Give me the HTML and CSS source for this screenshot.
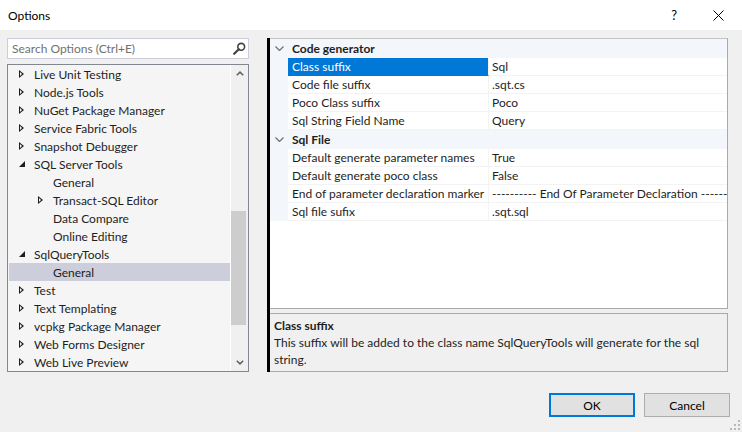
FILE: index.html
```html
<!DOCTYPE html>
<html lang="en">
<head>
<meta charset="utf-8">
<title>Options</title>
<link rel="stylesheet" href="styles.css">
</head>
<body>
<div class="window">
  <header class="titlebar">
    <span class="title">Options</span>
    <div class="tb-buttons">
      <span class="help">?</span>
      <svg class="close" width="11" height="11" viewBox="0 0 11 11"><path d="M0.5 0.5 L10.5 10.5 M10.5 0.5 L0.5 10.5" stroke="#000" stroke-width="1" fill="none"/></svg>
    </div>
  </header>

  <main class="body">
    <section class="left">
      <div class="search">
        <span class="search-ph">Search Options (Ctrl+E)</span>
        <svg class="search-icon" width="13" height="13" viewBox="0 0 13 13"><circle cx="8.2" cy="4.8" r="3.4" fill="none" stroke="#424242" stroke-width="1.6"/><path d="M5.8 7.2 L1.2 11.8" stroke="#424242" stroke-width="2.2" stroke-linecap="round"/></svg>
      </div>
      <div class="tree">
        <ul class="tree-rows">
          <li class="node lvl0"><span class="exp collapsed"></span>Live Unit Testing</li>
          <li class="node lvl0"><span class="exp collapsed"></span>Node.js Tools</li>
          <li class="node lvl0"><span class="exp collapsed"></span>NuGet Package Manager</li>
          <li class="node lvl0"><span class="exp collapsed"></span>Service Fabric Tools</li>
          <li class="node lvl0"><span class="exp collapsed"></span>Snapshot Debugger</li>
          <li class="node lvl0"><span class="exp expanded"></span>SQL Server Tools</li>
          <li class="node lvl1"><span class="exp"></span>General</li>
          <li class="node lvl1"><span class="exp collapsed"></span>Transact-SQL Editor</li>
          <li class="node lvl1"><span class="exp"></span>Data Compare</li>
          <li class="node lvl1"><span class="exp"></span>Online Editing</li>
          <li class="node lvl0"><span class="exp expanded"></span>SqlQueryTools</li>
          <li class="node lvl1 selected"><span class="exp"></span>General</li>
          <li class="node lvl0"><span class="exp collapsed"></span>Test</li>
          <li class="node lvl0"><span class="exp collapsed"></span>Text Templating</li>
          <li class="node lvl0"><span class="exp collapsed"></span>vcpkg Package Manager</li>
          <li class="node lvl0"><span class="exp collapsed"></span>Web Forms Designer</li>
          <li class="node lvl0"><span class="exp collapsed"></span>Web Live Preview</li>
        </ul>
        <div class="vscroll">
          <div class="sb-btn"><svg width="8" height="5" viewBox="0 0 8 5"><path d="M0.8 4.3 L4 1.1 L7.2 4.3" fill="none" stroke="#606060" stroke-width="1.5"/></svg></div>
          <div class="sb-track"><div class="sb-thumb"></div></div>
          <div class="sb-btn"><svg width="8" height="5" viewBox="0 0 8 5"><path d="M0.8 0.7 L4 3.9 L7.2 0.7" fill="none" stroke="#606060" stroke-width="1.5"/></svg></div>
        </div>
      </div>
    </section>

    <section class="right">
      <div class="grid">
        <div class="cat"><span class="margin"><svg width="9" height="5" viewBox="0 0 9 5"><path d="M0.5 0.5 L4.5 4.5 L8.5 0.5" fill="none" stroke="#6f6f6f" stroke-width="1.2"/></svg></span><span class="cat-name">Code generator</span></div>
        <div class="prop selected"><span class="margin"></span><span class="pname">Class suffix</span><span class="pval">Sql</span></div>
        <div class="prop"><span class="margin"></span><span class="pname">Code file suffix</span><span class="pval">.sqt.cs</span></div>
        <div class="prop"><span class="margin"></span><span class="pname">Poco Class suffix</span><span class="pval">Poco</span></div>
        <div class="prop"><span class="margin"></span><span class="pname">Sql String Field Name</span><span class="pval">Query</span></div>
        <div class="cat"><span class="margin"><svg width="9" height="5" viewBox="0 0 9 5"><path d="M0.5 0.5 L4.5 4.5 L8.5 0.5" fill="none" stroke="#6f6f6f" stroke-width="1.2"/></svg></span><span class="cat-name">Sql File</span></div>
        <div class="prop"><span class="margin"></span><span class="pname">Default generate parameter names</span><span class="pval">True</span></div>
        <div class="prop"><span class="margin"></span><span class="pname">Default generate poco class</span><span class="pval">False</span></div>
        <div class="prop"><span class="margin"></span><span class="pname">End of parameter declaration marker</span><span class="pval">---------- End Of Parameter Declaration ----------</span></div>
        <div class="prop"><span class="margin"></span><span class="pname">Sql file sufix</span><span class="pval">.sqt.sql</span></div>
      </div>
      <div class="desc">
        <div class="desc-title">Class suffix</div>
        <div class="desc-text">This suffix will be added to the class name SqlQueryTools will generate for the sql string.</div>
      </div>
    </section>
  </main>

  <footer class="footer">
    <button class="btn default">OK</button>
    <button class="btn">Cancel</button>
  </footer>

  <svg class="grip" width="10" height="10" viewBox="0 0 10 10">
    <rect x="8" y="0" width="2" height="2" fill="#b8b8b8"/>
    <rect x="4" y="4" width="2" height="2" fill="#b8b8b8"/>
    <rect x="8" y="4" width="2" height="2" fill="#b8b8b8"/>
    <rect x="0" y="8" width="2" height="2" fill="#b8b8b8"/>
    <rect x="4" y="8" width="2" height="2" fill="#b8b8b8"/>
    <rect x="8" y="8" width="2" height="2" fill="#b8b8b8"/>
  </svg>
</div>
</body>
</html>
```

FILE: styles.css
```css
* { box-sizing: border-box; }

html, body {
  margin: 0;
  padding: 0;
}

body {
  font-family: Lato, "Segoe UI", sans-serif;
  font-size: 12px;
  color: #1e1e1e;
  background: #f0f0f0;
}

.window {
  position: relative;
  width: 742px;
  height: 432px;
  display: flex;
  flex-direction: column;
  background: #f0f0f0;
  overflow: hidden;
}

/* title bar */
.titlebar {
  height: 30px;
  background: #ffffff;
  display: flex;
  align-items: center;
  justify-content: space-between;
  padding-left: 8px;
}

.title {
  color: #000;
}

.tb-buttons {
  display: flex;
  align-items: center;
  gap: 36px;
  padding-right: 18px;
}

.help {
  font-size: 13px;
  color: #000;
}

.close { display: block; }

/* body */
.body {
  display: flex;
  padding: 8px 0 0 7px;
  gap: 18px;
}

.left {
  width: 242px;
  display: flex;
  flex-direction: column;
  gap: 5px;
}

.search {
  height: 21px;
  background: #fff;
  border: 1px solid #cccedb;
  display: flex;
  align-items: center;
  justify-content: space-between;
  padding: 0 2px 0 4px;
}

.search-ph {
  color: #717171;
}

.search-icon { display: block; }

/* tree */
.tree {
  height: 308px;
  border: 1px solid #828790;
  background: #f5f5f5;
  display: flex;
}

.tree-rows {
  list-style: none;
  margin: 0;
  padding: 0 0 0 1px;
  width: 222px;
  overflow: hidden;
}

.node {
  height: 18px;
  display: flex;
  align-items: center;
  white-space: nowrap;
}

.node.lvl0 { padding-left: 9px; }
.node.lvl1 { padding-left: 28px; }

.node.selected {
  background: #cccedb;
}

.exp {
  width: 16px;
  height: 18px;
  flex: none;
  position: relative;
}

.exp.collapsed::before {
  content: "";
  position: absolute;
  left: 1px;
  top: 5px;
  width: 0;
  height: 0;
  border-top: 4px solid transparent;
  border-bottom: 4px solid transparent;
  border-left: 5px solid #1e1e1e;
}

.exp.collapsed::after {
  content: "";
  position: absolute;
  left: 2px;
  top: 7px;
  width: 0;
  height: 0;
  border-top: 2px solid transparent;
  border-bottom: 2px solid transparent;
  border-left: 2.5px solid #f5f5f5;
}

.node.selected .exp.collapsed::after { border-left-color: #cccedb; }

.exp.expanded::before {
  content: "";
  position: absolute;
  left: 1px;
  top: 6px;
  width: 0;
  height: 0;
  border-left: 6px solid transparent;
  border-bottom: 6px solid #1e1e1e;
}

.vscroll {
  width: 18px;
  border-left: 1px solid #ffffff;
  background: #f0f0f0;
  display: flex;
  flex-direction: column;
}

.sb-btn {
  height: 17px;
  display: flex;
  align-items: center;
  justify-content: center;
  flex: none;
}

.sb-btn svg { display: block; }

.sb-track {
  flex: 1;
}

.sb-thumb {
  margin-top: 129px;
  width: 15px;
  height: 114px;
  background: #cdcdcd;
}

/* right side */
.right {
  width: 461px;
  height: 334px;
  border-left: 3px solid #000;
  display: flex;
  flex-direction: column;
  gap: 4px;
}

.grid {
  height: 271px;
  background: #fff;
  border: 1px solid #a9a9a9;
  border-left: none;
  border-top-color: #c4c4c4;
  overflow: hidden;
}

.cat {
  height: 19px;
  background: #f3f6fb;
  display: flex;
  align-items: center;
  font-weight: bold;
  color: #1e1e1e;
  border-bottom: 1px solid #f3f6fb;
}

.margin {
  width: 18px;
  height: 100%;
  flex: none;
  display: flex;
  align-items: center;
  justify-content: center;
  background: #f3f6fb;
  padding-left: 1px;
}

.margin svg { display: block; }

.cat-name {
  padding-left: 4px;
}

.prop {
  height: 18px;
  display: flex;
  align-items: stretch;
  white-space: nowrap;
}

.pname {
  width: 201px;
  flex: none;
  padding-left: 4px;
  display: flex;
  align-items: center;
  border-bottom: 1px solid #f3f3f3;
  border-right: 1px solid #f3f3f3;
  overflow: hidden;
}

.pval {
  flex: 1;
  padding-left: 3px;
  display: flex;
  align-items: center;
  border-bottom: 1px solid #f3f3f3;
  overflow: hidden;
}

.prop.selected .pname {
  background: #0078d7;
  color: #fff;
  border-bottom-color: #0078d7;
}

.desc {
  height: 59px;
  background: #f0f0f0;
  border: 1px solid #a9a9a9;
  border-left: none;
  padding: 3px 6px 0 4px;
  line-height: 17px;
}

.desc-title {
  font-weight: bold;
}

/* footer */
.footer {
  display: flex;
  justify-content: flex-end;
  gap: 9px;
  padding: 21px 12px 0 0;
}

.btn {
  width: 86px;
  height: 24px;
  background: #e1e1e1;
  border: 1px solid #adadad;
  font-family: Lato, "Segoe UI", sans-serif;
  font-size: 12px;
  color: #000;
  padding: 0;
}

.btn.default {
  border: 2px solid #0078d7;
}

.grip {
  position: absolute;
  right: 2px;
  bottom: 2px;
}
```
